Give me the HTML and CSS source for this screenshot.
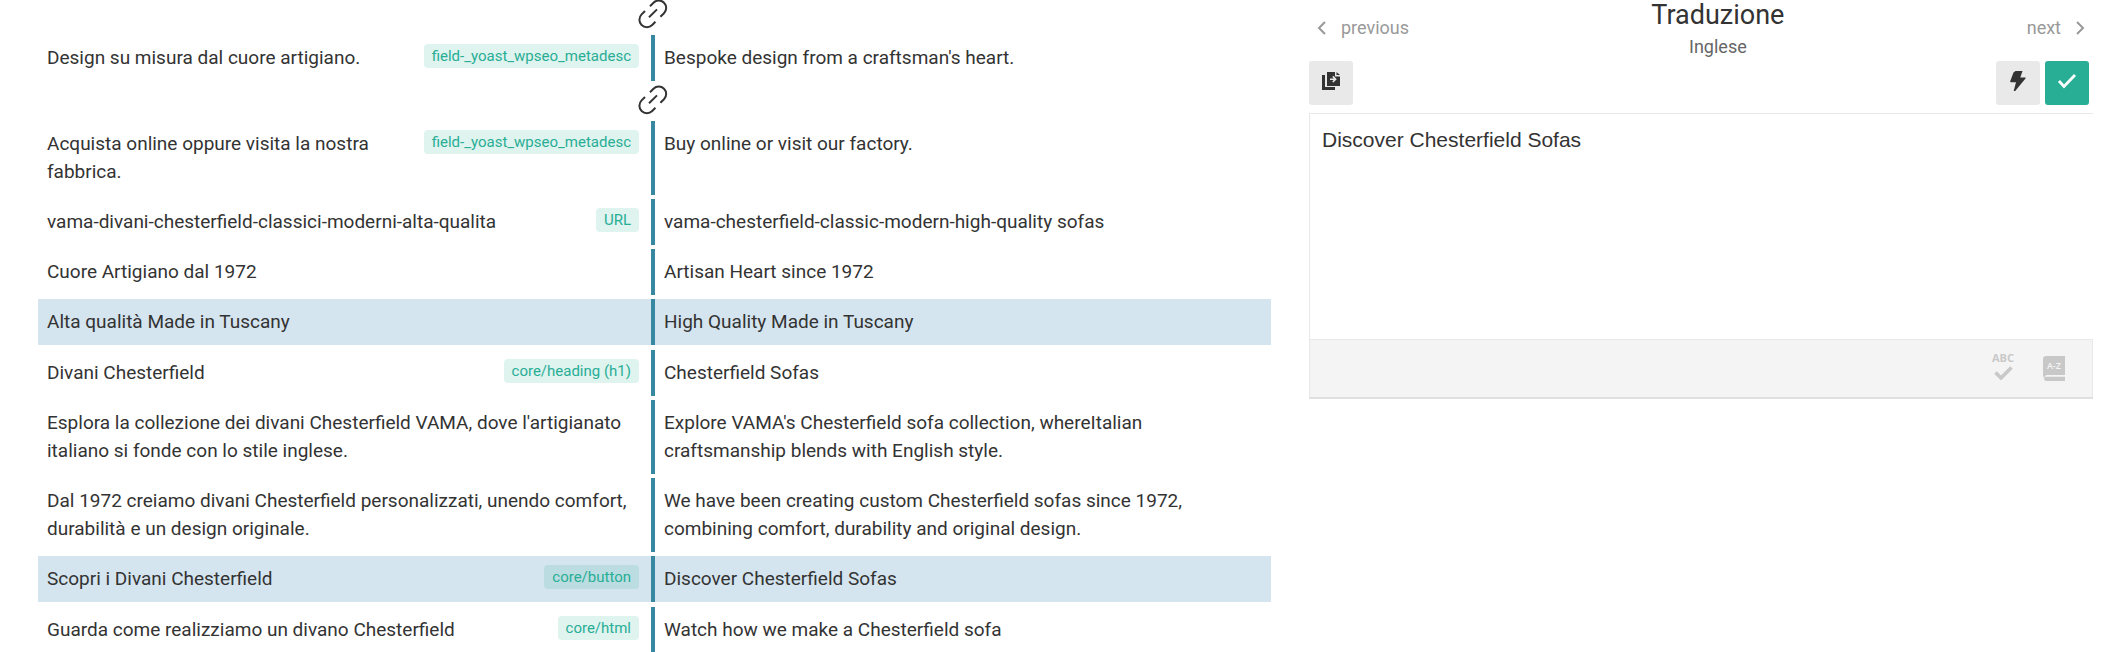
FILE: index.html
```html
<!DOCTYPE html>
<html lang="it">
<head>
    <meta charset="UTF-8">
    <meta name="viewport" content="width=device-width, initial-scale=1.0">
    <title>Traduzione</title>
    <link rel="stylesheet" href="styles.css">
</head>
<body>
    <svg class="sprite" aria-hidden="true">
        <symbol id="icon-link" viewBox="0 0 30 30">
            <path d="M12 7.200L15.500 3.700A7.400 7.400 0 0 1 26 14.200L22.400 17.800M7 12L3.600 15.400A7.400 7.400 0 0 0 14.200 26L17.400 22.800M11 18.200L19 10.400" fill="none" stroke="#333" stroke-width="2"/>
        </symbol>
    </svg>
    <main class="page">
        <section class="segments">
            <div class="link"><svg width="30" height="30"><use href="#icon-link"/></svg></div>
            <div class="row">
                <div class="source"><p>Design su misura dal cuore artigiano.</p><span class="tag">field-_yoast_wpseo_metadesc</span></div>
                <div class="target"><p>Bespoke design from a craftsman's heart.</p></div>
            </div>
            <div class="link"><svg width="30" height="30"><use href="#icon-link"/></svg></div>
            <div class="row">
                <div class="source"><p>Acquista online oppure visita la nostra fabbrica.</p><span class="tag">field-_yoast_wpseo_metadesc</span></div>
                <div class="target"><p>Buy online or visit our factory.</p></div>
            </div>
            <div class="row">
                <div class="source"><p>vama-divani-chesterfield-classici-moderni-alta-qualita</p><span class="tag">URL</span></div>
                <div class="target"><p>vama-chesterfield-classic-modern-high-quality sofas</p></div>
            </div>
            <div class="row">
                <div class="source"><p>Cuore Artigiano dal 1972</p></div>
                <div class="target"><p>Artisan Heart since 1972</p></div>
            </div>
            <div class="row selected">
                <div class="source"><p>Alta qualità Made in Tuscany</p></div>
                <div class="target"><p>High Quality Made in Tuscany</p></div>
            </div>
            <div class="row">
                <div class="source"><p>Divani Chesterfield</p><span class="tag">core/heading (h1)</span></div>
                <div class="target"><p>Chesterfield Sofas</p></div>
            </div>
            <div class="row">
                <div class="source"><p>Esplora la collezione dei divani Chesterfield VAMA, dove l'artigianato italiano si fonde con lo stile inglese.</p></div>
                <div class="target"><p>Explore VAMA's Chesterfield sofa collection, whereItalian craftsmanship blends with English style.</p></div>
            </div>
            <div class="row">
                <div class="source"><p>Dal 1972 creiamo divani Chesterfield personalizzati, unendo comfort, durabilità e un design originale.</p></div>
                <div class="target"><p>We have been creating custom Chesterfield sofas since 1972, combining comfort, durability and original design.</p></div>
            </div>
            <div class="row selected">
                <div class="source"><p>Scopri i Divani Chesterfield</p><span class="tag">core/button</span></div>
                <div class="target"><p>Discover Chesterfield Sofas</p></div>
            </div>
            <div class="row">
                <div class="source"><p>Guarda come realizziamo un divano Chesterfield</p><span class="tag">core/html</span></div>
                <div class="target"><p>Watch how we make a Chesterfield sofa</p></div>
            </div>
        </section>

        <section class="editor">
            <header class="editor-header">
                <button class="nav" type="button">
                    <svg width="10" height="14" viewBox="0 0 10 14"><path d="M8 1L2 7L8 13" fill="none" stroke="currentColor" stroke-width="2"/></svg>
                    previous
                </button>
                <div class="heading">
                    <h1>Traduzione</h1>
                    <label for="translation">Inglese</label>
                </div>
                <button class="nav" type="button">
                    next
                    <svg width="10" height="14" viewBox="0 0 10 14"><path d="M2 1L8 7L2 13" fill="none" stroke="currentColor" stroke-width="2"/></svg>
                </button>
            </header>
            <div class="toolbar">
                <button class="tool copy" type="button" aria-label="Copy source">
                    <svg width="18" height="18" viewBox="0 0 18 18">
                        <path d="M0 3H3V15H13V18H0Z" fill="#333"/>
                        <path d="M5 0H13V4.500H18V14H5ZM14.500 0L18 3H14.500Z" fill="#333"/>
                        <path d="M8 7.200H13M10.800 4.400L13.600 7.200L10.800 10" fill="none" stroke="#e9e9e9" stroke-width="1.600"/>
                    </svg>
                </button>
                <button class="tool" type="button" aria-label="Machine translation">
                    <svg width="16" height="20" viewBox="0 0 16 20"><path d="M5.500 0H12.500L10.300 6.500H15.200Q16 6.600 15.500 7.600L5.200 20H3.700L6 11.300H1Q0 11.200 .2 10.200L3.500 1.500Z" fill="#333"/></svg>
                </button>
                <button class="tool confirm" type="button" aria-label="Confirm">
                    <svg width="20" height="16" viewBox="0 0 20 16"><path d="M2 8L7 13.500L18 2" fill="none" stroke="#fff" stroke-width="2.800"/></svg>
                </button>
            </div>
            <div class="box">
                <textarea id="translation" spellcheck="false">Discover Chesterfield Sofas</textarea>
                <footer class="box-footer">
                    <button class="spell" type="button">
                        ABC
                        <svg width="19" height="14" viewBox="0 0 19 14"><path d="M1.500 6.500L7 12L17.500 1.500" fill="none" stroke="currentColor" stroke-width="3.600"/></svg>
                    </button>
                    <button class="glossary" type="button" aria-label="Glossary">
                        <svg width="22" height="25" viewBox="0 0 22 25">
                            <path d="M3 0H22V19H4Q2 19 1.500 22Q0 21 0 19V3Q0 0 3 0Z" fill="currentColor"/>
                            <path d="M3 20.800H22V25H3Q1 24.600 1 22.800Q1.200 21 3 20.800Z" fill="currentColor"/>
                            <text class="az" x="11" y="13" text-anchor="middle">A-Z</text>
                        </svg>
                    </button>
                </footer>
            </div>
        </section>
    </main>
</body>
</html>
```
FILE: styles.css
```css
* {
    box-sizing: border-box;
    margin: 0;
    padding: 0;
}

body {
    font-family: Roboto, sans-serif;
    font-size: 19px;
    line-height: 28px;
    color: #333;
    background: #fff;
    overflow: hidden;
}

button {
    border: none;
    background: none;
    font: inherit;
    cursor: pointer;
}

.sprite {
    display: none;
}

.page {
    display: grid;
    grid-template-columns: 1233fr 784fr;
    gap: 38px;
    align-items: start;
    padding: 0 23px 0 38px;
}

/* Segments */
.segments {
    margin-top: -1px;
}

.link {
    display: flex;
    justify-content: center;
    height: 36px;
    padding-right: 4px;
}

.row {
    display: grid;
    grid-template-columns: 613fr 620fr;
    margin-bottom: 4px;
}

.row.selected {
    margin-bottom: 5px;
    background: #d5e5ef;
}

.source {
    display: flex;
    justify-content: space-between;
    align-items: flex-start;
    gap: 24px;
    padding: 9px 8px 9px 9px;
}

.target {
    padding: 9px;
    border-left: 4px solid #3788a0;
}

.tag {
    flex: none;
    margin-right: 4px;
    padding: 0 8px;
    border-radius: 4px;
    background: rgba(40, 174, 149, 0.15);
    color: #28ae95;
    font-size: 15px;
    line-height: 24px;
}

/* Editor */
.editor-header {
    display: flex;
    justify-content: space-between;
    padding: 0 8px;
    height: 61px;
}

.nav {
    display: flex;
    align-items: center;
    gap: 14px;
    height: 56px;
    color: #999;
    font-size: 18px;
}

.heading {
    display: flex;
    flex-direction: column;
    align-items: center;
}

.heading h1 {
    font-size: 27px;
    font-weight: 400;
    line-height: 30px;
}

.heading label {
    color: #666;
    font-size: 18px;
    line-height: 34px;
}

.toolbar {
    display: flex;
    gap: 5px;
    padding: 0 4px 8px 0;
}

.tool {
    display: flex;
    justify-content: center;
    align-items: center;
    width: 44px;
    height: 44px;
    padding-bottom: 4px;
    border-radius: 3px;
    background: #e9e9e9;
}

.copy {
    margin-right: auto;
}

.confirm {
    background: #28ae95;
}

.box {
    border: 1px solid #e8e8e8;
    border-right: none;
    border-bottom: 2px solid #e0e0e0;
}

textarea {
    display: block;
    width: 100%;
    height: 225px;
    padding: 12px;
    border: none;
    outline: none;
    resize: none;
    background: #fff;
    color: #333;
    font-family: "Liberation Sans", Arial, sans-serif;
    font-size: 21px;
    line-height: 28px;
}

.box-footer {
    display: flex;
    justify-content: flex-end;
    align-items: center;
    gap: 29px;
    height: 58px;
    padding-right: 27px;
    border-top: 1px solid #e8e8e8;
    border-right: 1px solid #e8e8e8;
    background: #f4f4f4;
}

.box-footer button {
    color: #c8c8c8;
}

.spell {
    display: flex;
    flex-direction: column;
    align-items: center;
    gap: 2px;
    padding-bottom: 6px;
    font: 700 11px/12px "Open Sans", sans-serif;
}

.glossary svg {
    display: block;
}

.az {
    fill: #f4f4f4;
    font: 600 9px "Open Sans", sans-serif;
}
```
